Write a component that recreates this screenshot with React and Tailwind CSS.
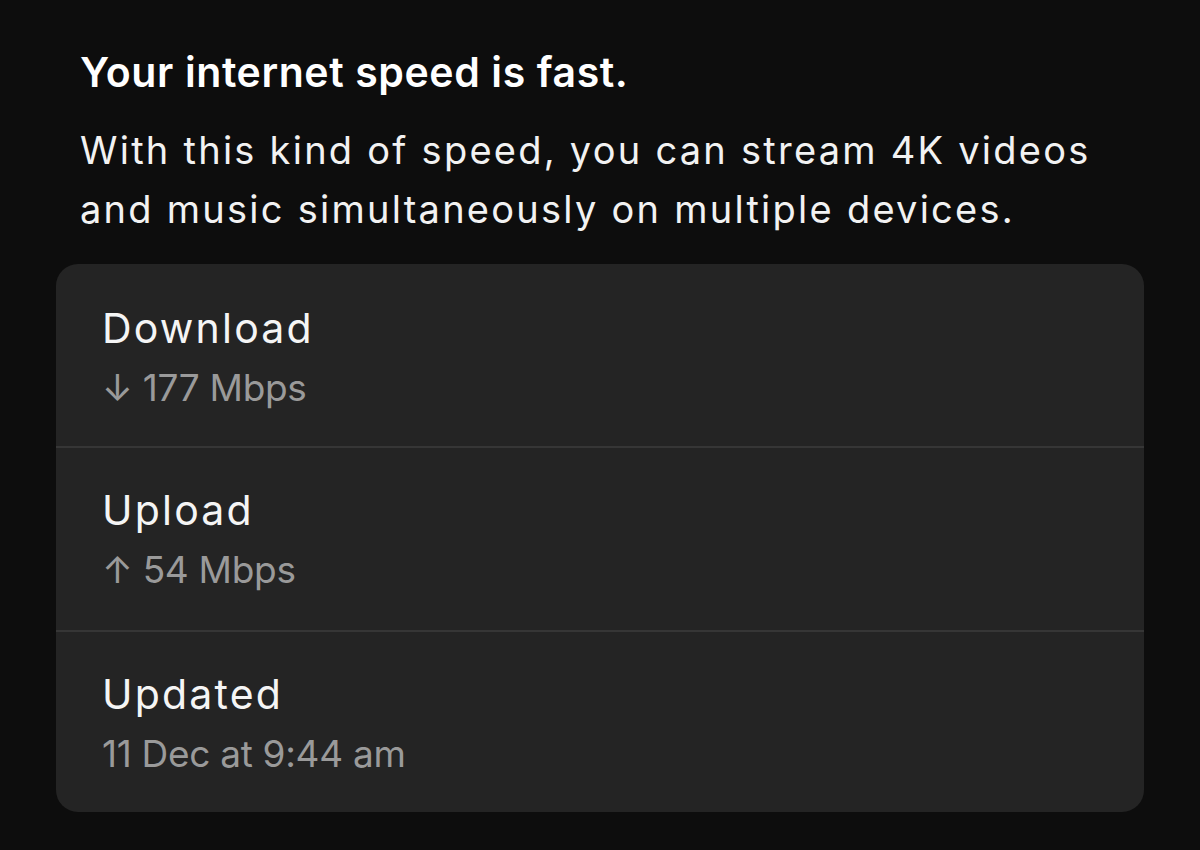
export default function App() {
  const rows = [
    { label: "Download", value: "↓ 177 Mbps" },
    { label: "Upload", value: "↑ 54 Mbps" },
    { label: "Updated", value: "11 Dec at 9:44 am" },
  ];
  return (
    <div
      className="w-[1200px] h-[850px] bg-[#0d0d0d] overflow-hidden pt-[48px]"
      style={{ fontFamily: "Inter, 'Noto Sans', sans-serif" }}
    >
      <div className="pl-[80px]">
        <h1 className="text-[41px] leading-[48px] font-semibold text-white tracking-[0.6px]">
          Your internet speed is fast.
        </h1>
        <p className="mt-[25px] text-[38px] leading-[59px] text-[#f2f2f2] tracking-[2.25px]">
          With this kind of speed, you can stream 4K videos
          <br />
          and music simultaneously on multiple devices.
        </p>
      </div>
      <div className="mt-[25px] ml-[56px] w-[1088px] h-[548px] rounded-[22px] bg-[#242424] overflow-hidden flex flex-col">
        {rows.map((r, i) => (
          <div
            key={r.label}
            className={
              i === 0
                ? "h-[182px] pl-[46px] pt-[39px]"
                : i === 1
                ? "h-[184px] pl-[46px] pt-[37px] border-t-2 border-[#363636]"
                : "h-[182px] pl-[46px] pt-[37px] border-t-2 border-[#363636]"
            }
          >
            <div className="text-[41px] leading-[50px] text-[#f5f5f5] tracking-[2.2px]">{r.label}</div>
            <div className="mt-[13px] text-[37px] leading-[44px] text-[#9a9a9a] tracking-[-0.3px]">{r.value}</div>
          </div>
        ))}
      </div>
    </div>
  );
}
